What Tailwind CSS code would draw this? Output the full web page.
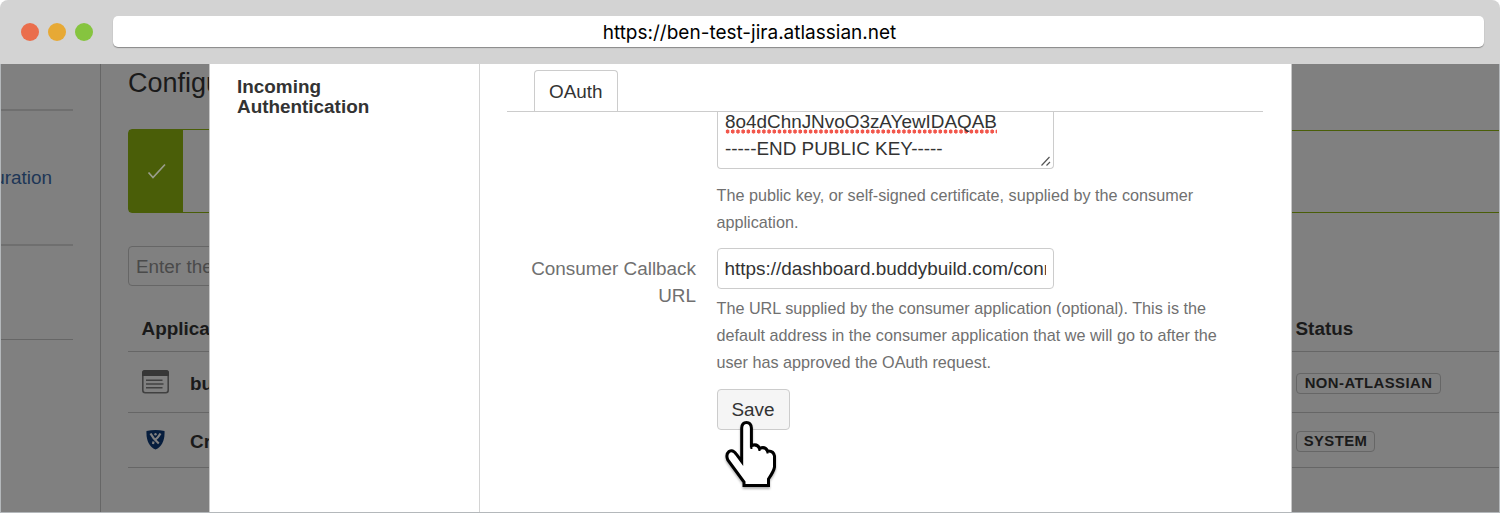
<!DOCTYPE html>
<html lang="en">
<head>
<meta charset="utf-8">
<title>Configure application links</title>
<script src="https://cdn.jsdelivr.net/npm/@tailwindcss/browser@4"></script>
</head>
<body class="w-[1500px] h-[513px] overflow-hidden bg-white font-['Liberation_Sans',Arial,sans-serif] text-[18.9px] leading-[27px] text-[#333]">
<div class="flex flex-col h-[513px]">
  <!-- Browser bar -->
  <header class="h-16 shrink-0 rounded-t-lg bg-[#d3d3d3] flex items-start pl-[21px] pr-[16px]">
    <div class="flex gap-[9px] mt-[23px] w-[92px] shrink-0">
      <span class="size-[18px] rounded-full bg-[#ea6e4c]"></span>
      <span class="size-[18px] rounded-full bg-[#e7a935]"></span>
      <span class="size-[18px] rounded-full bg-[#86c43f]"></span>
    </div>
    <div class="mt-4 h-[31px] flex-1 rounded-[5px] bg-white shadow-[0_1px_1px_#888] pr-[98px] text-center text-black font-['Inter','Liberation_Sans',sans-serif] text-[19px] leading-[33px]">https://ben-test-jira.atlassian.net</div>
  </header>

  <div class="flex h-[449px] border-x border-b border-[#b4b8bb] bg-[#808080] overflow-hidden">
    <!-- Side navigation -->
    <nav class="w-[100px] shrink-0 border-r border-[#666] pt-[45px]">
      <div class="w-[72px] border-t-2 border-[#6f6f6f]"></div>
      <div class="mt-[53px] w-[51px] flex justify-end overflow-hidden whitespace-nowrap text-[#1d3656]">uration</div>
      <div class="mt-[53px] w-[72px] border-t-2 border-[#6f6f6f]"></div>
      <div class="mt-[93px] w-[72px] border-t border-[#666]"></div>
    </nav>

    <!-- Page content -->
    <main class="w-[108px] shrink-0 pl-[27px] overflow-hidden whitespace-nowrap text-[#1a1a1a]">
      <h1 class="pt-[3px] h-[65px] text-[27px] leading-[32px]">Configu</h1>
      <div class="w-[120px] h-[84px] rounded-[4px] border border-[#4a5e08] flex">
        <div class="w-[54px] bg-[#4a5e08] flex items-center justify-center">
          <svg class="size-5 mt-[1px] ml-[2px]" viewBox="0 0 20 20" fill="none" stroke="#9a9d8c" stroke-width="1.7"><path d="M1.5 10.5 6 15.5 18 2.5"/></svg>
        </div>
      </div>
      <div class="mt-[33px] w-[120px] h-[40px] rounded-[4px] border border-[#666] pl-[7px] leading-[39px] text-[#4a4a4a]">Enter the</div>
      <div class="w-[200px] h-[66px] pt-[29px] pl-[13.5px] font-bold border-b border-[#666]">Applica</div>
      <div class="w-[200px] h-[61px] pl-[14px] border-b border-[#666] flex items-center">
        <svg class="w-[27px] h-[24px]" viewBox="0 0 27 24" fill="none" stroke="#414141"><rect x=".8" y=".8" width="25.4" height="22" rx="2.5" stroke-width="1.6"/><path d="M0 6V3Q0 0 3 0h21q3 0 3 3v3z" fill="#373737" stroke="none"/><path d="M4 10.3h16.500M4 14h17.500M4 17.800h16.500" stroke-width="1.6"/></svg>
        <b class="ml-[21px] mt-[2px]">bu</b>
      </div>
      <div class="w-[200px] h-[55px] pl-[18px] border-b border-[#666] flex items-center">
        <svg class="w-[19px] h-[20px]" viewBox="0 0 19 20"><path d="M.5 1Q9.500-.8 18.500 1C19 10 16 16.500 9.500 19.500 3 16.500 0 10 .5 1z" fill="#061d3d"/><circle cx="9.500" cy="4.200" r="1.200" fill="#808080"/><path d="M4.500 3.500Q7 8.500 12.800 13.500M14.500 3.500Q12 8 8.500 10.200M7.500 11.500 7 14" stroke="#808080" stroke-width="2.200" fill="none"/></svg>
        <b class="ml-[25px] mt-[2px]">Cr</b>
      </div>
    </main>

    <!-- Dialog -->
    <section class="w-[1083px] shrink-0 bg-white border-x border-[#c8c8c8] flex">
      <aside class="w-[270px] border-r border-[#d4d4d4] pl-[27px] pt-[13px] font-bold leading-[20.25px]">Incoming<br>Authentication</aside>
      <div class="flex-1 pl-[27px]">
        <div class="w-[756px] h-[48px] border-b border-[#ccc] pl-[27px] pt-[6px]">
          <div class="w-[84px] h-[41px] rounded-t-[4px] border border-b-0 border-[#ccc] bg-white pl-[14px] leading-[42px]">OAuth</div>
        </div>
        <div class="flex">
          <div class="w-[189px] shrink-0 pt-[143px] text-right text-[#707070]">Consumer Callback<br>URL</div>
          <div class="ml-[20.5px] w-[515px] text-[16.2px] text-[#707070]">
            <div class="flex justify-between w-[337.5px] h-[57px] border border-t-0 border-[#ccc] rounded-b-[4px] pl-[7.5px] text-[18.9px] text-[#333]">
              <div class="mt-[-4px] whitespace-nowrap"><span class="inline-block h-[27px] bg-[radial-gradient(circle,#f2564b_1.6px,transparent_2.2px)] bg-[length:5.2px_4.5px] bg-[position:0_20.5px] bg-repeat-x">8o4dChnJNvoO3zAYewIDAQAB</span><br>-----END PUBLIC KEY-----</div>
              <svg class="self-end size-[12px] mr-px mb-px" viewBox="0 0 12 12" stroke="#555" stroke-width="1.200"><path d="M1.500 10.500l8-8.500M6.500 10.500l3.500-3.500"/></svg>
            </div>
            <p class="mt-[13px] whitespace-nowrap">The public key, or self-signed certificate, supplied by the consumer<br>application.</p>
            <div class="mt-[12px] w-[337.5px] h-[41px] rounded-[4px] border border-[#ccc] px-[7px]"><div class="overflow-hidden whitespace-nowrap text-[18.9px] leading-[39px] text-[#333]">https://dashboard.buddybuild.com/conn</div></div>
            <p class="mt-[6px] whitespace-nowrap">The URL supplied by the consumer application (optional). This is the<br>default address in the consumer application that we will go to after the<br>user has approved the OAuth request.</p>
            <div class="relative mt-[13px] w-[73px]">
              <button class="block w-[73px] h-[41px] rounded-[4px] border border-[#ccc] bg-[#f5f5f5] text-[18.9px] leading-[38px] text-[#333]">Save</button>
              <svg class="absolute left-[7px] top-[31px] w-[54px] h-[72px] drop-shadow-[0_2px_1px_rgba(0,0,0,0.3)]" viewBox="0 0 54 72" fill="#fff" stroke="#000" stroke-width="3"><path d="M20 65.500V62L3.800 40Q1.500 34.500 5 31.500 9 29 12.500 34.500L17.700 41.500V8Q18 2.500 22.500 2.500T27.400 8V25.500Q33.500 23.300 35.500 28.500 41 26 43.500 31 49.500 30.500 50.500 36V47Q50 51 44.500 59V65.500z"/><path d="M27.400 24V29M35.500 27.500V31M43.500 30V33.500" stroke-width="2"/></svg>
            </div>
          </div>
        </div>
      </div>
    </section>

    <!-- Status column -->
    <section class="flex-1 text-[#1a1a1a]">
      <div class="mt-[66px] h-[83px] border-y border-[#4a5e08]"></div>
      <div class="h-[139px] pt-[102px] pl-[3.5px] font-bold border-b border-[#666]">Status</div>
      <div class="h-[61px] pt-[21px] pl-[4px] border-b border-[#666]"><div class="w-[145px] h-[21px] rounded-[4px] border border-[#666] text-center font-bold text-[14.85px] leading-[19px] tracking-[0.45px]">NON-ATLASSIAN</div></div>
      <div class="h-[55px] pt-[18px] pl-[4px] border-b border-[#666]"><div class="w-[79px] h-[21px] rounded-[4px] border border-[#666] text-center font-bold text-[14.85px] leading-[19px] tracking-[0.45px]">SYSTEM</div></div>
    </section>
  </div>
</div>
</body>
</html>
